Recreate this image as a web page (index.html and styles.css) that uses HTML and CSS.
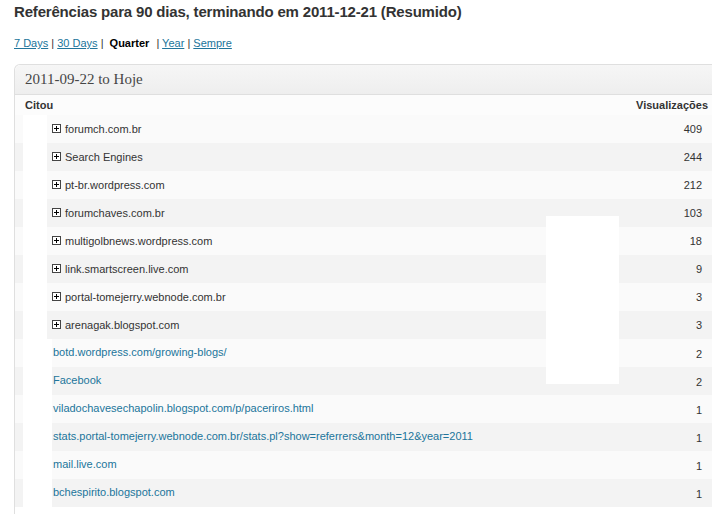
FILE: index.html
```html
<!DOCTYPE html>
<html>
<head>
<meta charset="utf-8">
<link rel="stylesheet" href="styles.css">
</head>
<body>
<div class="page">
  <h2 class="title">Referências para 90 dias, terminando em 2011-12-21 (Resumido)</h2>
  <p class="periods"><a href="#">7 Days</a> | <a href="#">30 Days</a> | <strong class="current">Quarter</strong> | <a href="#">Year</a> | <a href="#">Sempre</a></p>
  <div class="box">
    <h3 class="box-title">2011-09-22 to Hoje</h3>
    <div class="head-row">
      <span class="head-label">Citou</span>
      <span class="head-views">Visualizações</span>
    </div>
    <div class="row odd"><span class="gap"></span><span class="blank"></span><span class="label"><svg class="plus" width="9" height="9" viewBox="0 0 9 9"><rect x="0.5" y="0.5" width="8" height="8" fill="#fff" stroke="#444"/><path d="M2 4.5h5M4.5 2v5" stroke="#000" stroke-width="1"/></svg>forumch.com.br</span><span class="num">409</span></div>
    <div class="row even"><span class="gap"></span><span class="blank"></span><span class="label"><svg class="plus" width="9" height="9" viewBox="0 0 9 9"><rect x="0.5" y="0.5" width="8" height="8" fill="#fff" stroke="#444"/><path d="M2 4.5h5M4.5 2v5" stroke="#000" stroke-width="1"/></svg>Search Engines</span><span class="num">244</span></div>
    <div class="row odd"><span class="gap"></span><span class="blank"></span><span class="label"><svg class="plus" width="9" height="9" viewBox="0 0 9 9"><rect x="0.5" y="0.5" width="8" height="8" fill="#fff" stroke="#444"/><path d="M2 4.5h5M4.5 2v5" stroke="#000" stroke-width="1"/></svg>pt-br.wordpress.com</span><span class="num">212</span></div>
    <div class="row even"><span class="gap"></span><span class="blank"></span><span class="label"><svg class="plus" width="9" height="9" viewBox="0 0 9 9"><rect x="0.5" y="0.5" width="8" height="8" fill="#fff" stroke="#444"/><path d="M2 4.5h5M4.5 2v5" stroke="#000" stroke-width="1"/></svg>forumchaves.com.br</span><span class="num">103</span></div>
    <div class="row odd"><span class="gap"></span><span class="blank"></span><span class="label"><svg class="plus" width="9" height="9" viewBox="0 0 9 9"><rect x="0.5" y="0.5" width="8" height="8" fill="#fff" stroke="#444"/><path d="M2 4.5h5M4.5 2v5" stroke="#000" stroke-width="1"/></svg>multigolbnews.wordpress.com</span><span class="num">18</span></div>
    <div class="row even"><span class="gap"></span><span class="blank"></span><span class="label"><svg class="plus" width="9" height="9" viewBox="0 0 9 9"><rect x="0.5" y="0.5" width="8" height="8" fill="#fff" stroke="#444"/><path d="M2 4.5h5M4.5 2v5" stroke="#000" stroke-width="1"/></svg>link.smartscreen.live.com</span><span class="num">9</span></div>
    <div class="row odd"><span class="gap"></span><span class="blank"></span><span class="label"><svg class="plus" width="9" height="9" viewBox="0 0 9 9"><rect x="0.5" y="0.5" width="8" height="8" fill="#fff" stroke="#444"/><path d="M2 4.5h5M4.5 2v5" stroke="#000" stroke-width="1"/></svg>portal-tomejerry.webnode.com.br</span><span class="num">3</span></div>
    <div class="row even"><span class="gap"></span><span class="blank"></span><span class="label"><svg class="plus" width="9" height="9" viewBox="0 0 9 9"><rect x="0.5" y="0.5" width="8" height="8" fill="#fff" stroke="#444"/><path d="M2 4.5h5M4.5 2v5" stroke="#000" stroke-width="1"/></svg>arenagak.blogspot.com</span><span class="num">3</span></div>
    <div class="row odd link-row"><span class="gap"></span><span class="blank"></span><span class="label"><a href="#">botd.wordpress.com/growing-blogs/</a></span><span class="num">2</span></div>
    <div class="row even link-row"><span class="gap"></span><span class="blank"></span><span class="label"><a href="#">Facebook</a></span><span class="num">2</span></div>
    <div class="row odd link-row"><span class="gap"></span><span class="blank"></span><span class="label"><a href="#">viladochavesechapolin.blogspot.com/p/paceriros.html</a></span><span class="num">1</span></div>
    <div class="row even link-row"><span class="gap"></span><span class="blank"></span><span class="label"><a href="#">stats.portal-tomejerry.webnode.com.br/stats.pl?show=referrers&amp;month=12&amp;year=2011</a></span><span class="num">1</span></div>
    <div class="row odd link-row"><span class="gap"></span><span class="blank"></span><span class="label"><a href="#">mail.live.com</a></span><span class="num">1</span></div>
    <div class="row even link-row"><span class="gap"></span><span class="blank"></span><span class="label"><a href="#">bchespirito.blogspot.com</a></span><span class="num">1</span></div>
    <div class="mask"></div>
  </div>
</div>
</body>
</html>
```

FILE: styles.css
```css
html, body {
  margin: 0;
  padding: 0;
  background: #fff;
  overflow: hidden;
}
body {
  font-family: "Liberation Sans", Arial, sans-serif;
  font-size: 11px;
  color: #333;
}
.page {
  padding: 0 0 0 14px;
  width: 720px;
}
.title {
  margin: 0;
  padding-top: 3px;
  height: 21px;
  line-height: 18px;
  font-size: 15px;
  letter-spacing: -0.18px;
  font-weight: bold;
  color: #333;
}
.periods {
  margin: 12px 0 0 0;
  height: 28px;
  line-height: 14px;
  font-size: 11px;
  color: #333;
}
.periods a {
  color: #21759b;
  text-decoration: underline;
}
.periods .current {
  color: #000;
  margin: 0 4px 0 3px;
}
.box {
  position: relative;
  border: 1px solid #dfdfdf;
  border-top-left-radius: 6px;
  border-bottom: none;
  width: 704px;
  height: 460px;
  overflow: hidden;
}
.box-title {
  margin: 0;
  height: 29px;
  line-height: 29px;
  padding-left: 10px;
  font-family: "Liberation Serif", "DejaVu Serif", serif;
  font-weight: normal;
  font-size: 15px;
  color: #464646;
  background: linear-gradient(#f6f6f6, #eeeeee);
  border-bottom: 1px solid #dfdfdf;
  border-top-left-radius: 6px;
}
.head-row {
  display: flex;
  justify-content: space-between;
  height: 20px;
  line-height: 20px;
  padding: 0 9px 0 10px;
  background: #fcfcfc;
  font-weight: bold;
  color: #333;
}
.head-views {
  margin-right: 2px;
}
.row {
  display: flex;
  height: 28px;
  line-height: 28px;
}
.row.odd { background: #fafafa; }
.row.even { background: #f3f3f3; }
.gap { width: 8px; flex: none; }
.blank { width: 24px; flex: none; background: #fff; }
.link-row .blank { width: 29px; }
.label {
  flex: 1;
  padding-left: 5px;
  display: flex;
  align-items: center;
  color: #333;
}
.link-row .label {
  padding-left: 1px;
  line-height: 26px;
  align-items: flex-start;
}
.label a {
  color: #21759b;
  text-decoration: none;
}
.plus {
  display: block;
  margin-right: 4px;
  margin-top: -1px;
}
.num {
  padding-right: 17px;
  text-align: right;
}
.link-row .num {
  line-height: 30px;
}
.mask {
  position: absolute;
  left: 531px;
  top: 151px;
  width: 73px;
  height: 168px;
  background: #fff;
}
```
